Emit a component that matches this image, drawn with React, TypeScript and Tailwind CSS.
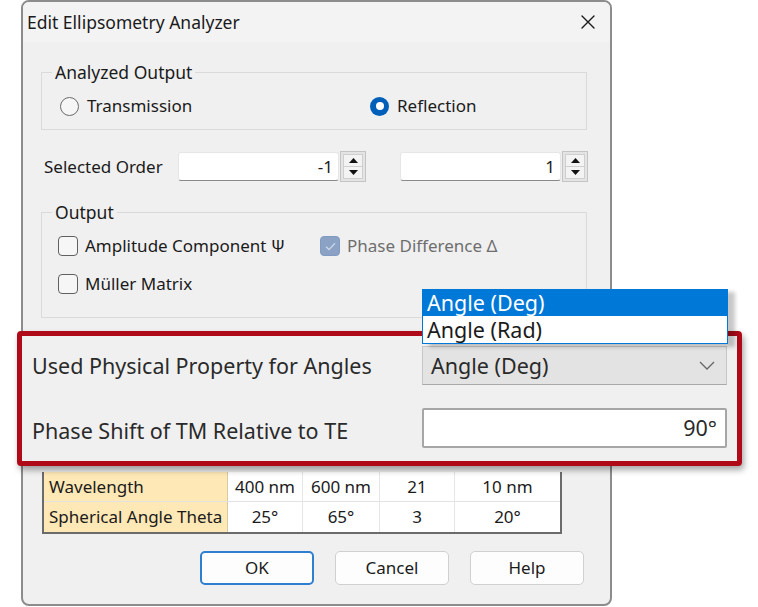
import type { ReactNode } from "react"

function CloseIcon() {
  return (
    <svg width="14" height="14" viewBox="0 0 14 14" className="block">
      <path d="M1 1 L13 13 M13 1 L1 13" stroke="#1a1a1a" strokeWidth="1.4" strokeLinecap="round" />
    </svg>
  )
}

function Radio({ checked, children, className = "" }: { checked?: boolean; children: ReactNode; className?: string }) {
  return (
    <label className={`flex items-center gap-[8px] ${className}`}>
      {checked ? (
        <span className="flex size-[19px] items-center justify-center rounded-full bg-[#005fb8]">
          <span className="size-[8px] rounded-full bg-white" />
        </span>
      ) : (
        <span className="size-[19px] rounded-full border border-[#6a6a6a] bg-[#f6f6f6]" />
      )}
      <span>{children}</span>
    </label>
  )
}

function Checkbox({ checked, disabled, children, className = "" }: { checked?: boolean; disabled?: boolean; children: ReactNode; className?: string }) {
  return (
    <label className={`flex items-center gap-[7px] ${className}`}>
      {checked ? (
        <span className="flex size-[20px] items-center justify-center rounded-[4px] border border-[#7f9bc4] bg-[#8ba2c4]">
          <svg width="11" height="9" viewBox="0 0 11 9">
            <path d="M1 4.8 L4 7.6 L10 1.2" fill="none" stroke="#cad8ec" strokeWidth="1.3" />
          </svg>
        </span>
      ) : (
        <span className="size-[20px] rounded-[4px] border border-[#606060] bg-[#f6f6f6]" />
      )}
      <span className={disabled ? "text-[#6e6e6e]" : ""}>{children}</span>
    </label>
  )
}

function Spinner() {
  return (
    <div className="flex h-[31px] w-[26px] flex-col border border-[#c4c4c4] bg-[#e4e4e4] p-[2px]">
      <div className="flex flex-1 items-center justify-center border border-[#cfcfcf] bg-[#f3f3f3]">
        <svg width="9" height="5" viewBox="0 0 9 5">
          <path d="M0 5 L4.5 0 L9 5 Z" fill="#111" />
        </svg>
      </div>
      <div className="flex flex-1 items-center justify-center border border-t-0 border-[#cfcfcf] bg-[#f3f3f3]">
        <svg width="9" height="5" viewBox="0 0 9 5">
          <path d="M0 0 L4.5 5 L9 0 Z" fill="#111" />
        </svg>
      </div>
    </div>
  )
}

function NumberField({ value }: { value: string }) {
  return (
    <div className="flex items-center gap-px">
      <div className="flex h-[29px] w-[161px] items-center justify-end rounded-[3px] border border-[#e6e6e6] border-b-[#8a8a8a] bg-white pr-[5px]">
        {value}
      </div>
      <Spinner />
    </div>
  )
}

function Group({ title, children, className = "" }: { title: string; children: ReactNode; className?: string }) {
  return (
    <fieldset className={`ml-[18px] w-[546px] border border-[#dadada] ${className}`}>
      <legend className="ml-[10px] px-[3px] text-[17.5px] leading-[20px]">{title}</legend>
      {children}
    </fieldset>
  )
}

const ROWS = [
  { name: "Wavelength", cells: ["400 nm", "600 nm", "21", "10 nm"] },
  { name: "Spherical Angle Theta", cells: ["25°", "65°", "3", "20°"] },
]

const COL_W = ["w-[75px]", "w-[77px]", "w-[75px]", "w-[105px]"]

export default function App() {
  return (
    <div className="relative h-[607px] w-[758px] overflow-hidden bg-white font-['Noto_Sans',sans-serif] text-[17px] leading-[20px] text-[#1b1b1b]">
      {/* dialog window */}
      <div className="ml-[21px] flex h-[606px] w-[591px] flex-col rounded-[8px] border-2 border-[#8c8c8c] bg-[#f0f0f0]">
        <div className="flex h-[40px] items-center justify-between rounded-t-[6px] bg-[#f3f3f3] pl-[4px] pr-[15px]">
          <span className="text-[17.5px]">Edit Ellipsometry Analyzer</span>
          <CloseIcon />
        </div>

        <Group title="Analyzed Output" className="mt-[20px]">
          <div className="flex items-center pt-[14px] pb-[13px] pl-[18px]">
            <Radio className="w-[310px]">Transmission</Radio>
            <Radio checked>Reflection</Radio>
          </div>
        </Group>

        <div className="mt-[21px] flex items-center pl-[21px]">
          <span className="w-[134px]">Selected Order</span>
          <NumberField value="-1" />
          <div className="ml-[34px]">
            <NumberField value="1" />
          </div>
        </div>

        <Group title="Output" className="mt-[20px]">
          <div className="flex flex-col gap-[18px] pt-[14px] pb-[23px] pl-[16px]">
            <div className="flex items-center">
              <Checkbox className="w-[262px]">Amplitude Component Ψ</Checkbox>
              <Checkbox checked disabled>
                Phase Difference Δ
              </Checkbox>
            </div>
            <Checkbox>Müller Matrix</Checkbox>
          </div>
        </Group>

        {/* rows hidden under the magnified callout */}
        <div className="h-[154px]" />

        <div className="ml-[19px] w-[520px] border-x-2 border-b-2 border-[#6b6b6b] bg-white">
          {ROWS.map((row, i) => (
            <div key={row.name} className={`flex h-[30px] items-center ${i === 0 ? "border-b border-[#e2e2e2]" : ""}`}>
              <div className="flex h-full w-[184px] items-center border-r border-[#d9c9a0] bg-[#fde8b6] pl-[5px]">
                {row.name}
              </div>
              {row.cells.map((c, j) => (
                <div
                  key={j}
                  className={`flex h-full ${COL_W[j]} items-center justify-center ${j < 3 ? "border-r border-[#e6e6e6]" : ""}`}
                >
                  {c}
                </div>
              ))}
            </div>
          ))}
        </div>

        <div className="mt-[17px] flex justify-end gap-[21px] pr-[26px]">
          <button className="h-[34px] w-[114px] rounded-[5px] border-2 border-[#2f7fd0] bg-[#fdfdfd]">OK</button>
          <button className="h-[34px] w-[114px] rounded-[5px] border border-[#d0d0d0] bg-[#fdfdfd]">Cancel</button>
          <button className="h-[34px] w-[114px] rounded-[5px] border border-[#d0d0d0] bg-[#fdfdfd]">Help</button>
        </div>
      </div>

      {/* magnified callout */}
      <div className="absolute left-[17px] top-[331px] flex h-[135px] w-[725px] flex-col rounded-[4px] border-[5px] border-[#ae0a17] bg-[#f0f0f0] px-[10px] pt-[10px] text-[21.5px] leading-[26px] text-[#2a2a2a] shadow-[2px_4px_6px_rgba(0,0,0,0.35)]">
        <div className="flex items-center justify-between">
          <span>Used Physical Property for Angles</span>
          <div className="flex h-[39px] w-[305px] items-center justify-between border border-[#c6c6c6] border-b-[#a9a9a9] bg-[#e3e3e3] pl-[8px] pr-[11px]">
            <span>Angle (Deg)</span>
            <svg width="16" height="9" viewBox="0 0 16 9">
              <path d="M1 1 L8 8 L15 1" fill="none" stroke="#666" strokeWidth="1.3" />
            </svg>
          </div>
        </div>
        <div className="mt-[23px] flex items-center justify-between">
          <span className="pt-[6px]">Phase Shift of TM Relative to TE</span>
          <div className="flex h-[40px] w-[305px] items-center justify-end rounded-[2px] border-2 border-[#a6a6a6] bg-white pr-[8px]">
            90°
          </div>
        </div>
      </div>

      {/* open dropdown list */}
      <div className="absolute left-[422px] top-[289px] flex w-[306px] flex-col border border-[#0078d7] bg-white text-[21.5px] shadow-[7px_3px_4px_rgba(0,0,0,0.22)]">
        <div className="flex h-[26px] items-center bg-[#0078d7] pl-[4px] text-white">Angle (Deg)</div>
        <div className="flex h-[27px] items-center pl-[4px] text-[#1b1b1b]">Angle (Rad)</div>
      </div>
    </div>
  )
}
